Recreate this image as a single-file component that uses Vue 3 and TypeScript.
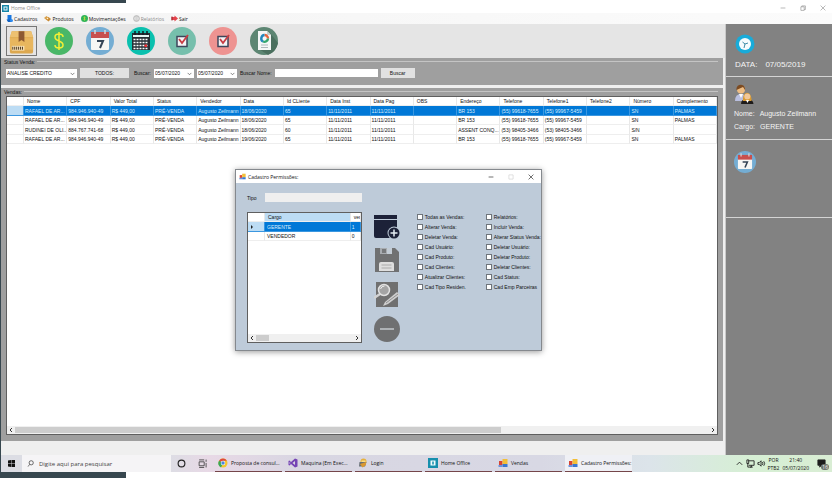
<script setup lang="ts">
import { ref } from 'vue'

interface Sale {
  selected?: boolean
  cells: string[]
}

interface TaskItem {
  icon: string
  label: string
  active?: boolean
}

const columns: string[] = [
  'Nome', 'CPF', 'Valor Total', 'Status', 'Vendedor', 'Data', 'Id CLiente', 'Data Inst',
  'Data Pag', 'OBS', 'Endereço', 'Telefone', 'Telefone1', 'Telefone2', 'Número', 'Complemento',
]

const sale = (name: string, cpf: string, date: string, id: string, address: string, phone: string, phone1: string, num: string, extra: string): string[] => [
  name, cpf, 'R$ 449,00', 'PRÉ-VENDA', 'Augusto Zeilmann', date, id, '11/11/2011', '11/11/2011', '', address, phone, phone1, '', num, extra,
]

const sales: Sale[] = [
  { selected: true, cells: sale('RAFAEL DE AR...', '984.946.940-49', '18/06/2020', '65', 'BR 153', '(55) 99618-7655', '(55) 99967-5459', 'SN', 'PALMAS') },
  { cells: sale('RAFAEL DE AR...', '984.946.940-49', '18/06/2020', '65', 'BR 153', '(55) 99618-7655', '(55) 99967-5459', 'SN', 'PALMAS') },
  { cells: sale('RUDINEI DE OLI...', '884.767.741-68', '18/06/2020', '60', 'ASSENT CONQ...', '(53) 98405-3466', '(53) 98405-3466', 'S/N', '') },
  { cells: sale('RAFAEL DE AR...', '984.946.940-49', '19/06/2020', '65', 'BR 153', '(55) 99618-7655', '(55) 99967-5459', 'SN', 'PALMAS') },
]

const permissionsLeft: string[] = ['Todas as Vendas:', 'Alterar Venda:', 'Deletar Venda:', 'Cad Usuário:', 'Cad Produto:', 'Cad Clientes:', 'Atualizar Clientes:', 'Cad Tipo Residen.']
const permissionsRight: string[] = ['Relatórios:', 'Incluir Venda:', 'Alterar Status Venda:', 'Deletar Usuário:', 'Deletar Produto:', 'Deletar Clientes:', 'Cad Status:', 'Cad Emp Parceiras']

const tasks: TaskItem[] = [
  { icon: 'chrome', label: 'Proposta de consul...' },
  { icon: 'vs', label: 'Maquina (Em Exec...' },
  { icon: 'login', label: 'Login' },
  { icon: 'home', label: 'Home Office' },
  { icon: 'form', label: 'Vendas' },
  { icon: 'form', label: 'Cadastro Permissões:', active: true },
]

const status = ref('ANALISE CREDITO')
const dateFrom = ref('05/07/2020')
const dateTo = ref('05/07/2020')
const customer = ref('')
const role = ref('')
const checked = ref<string[]>([])
</script>

<template>
  <div class="screen">
    <div class="strip strip-top"></div>

    <header class="titlebar">
      <svg class="app-icon" viewBox="0 0 14 14"><rect width="14" height="14" fill="#1686a8" /><rect x="3" y="3" width="8" height="8" fill="#e8f6fa" /><rect x="5" y="5" width="4" height="4" fill="#1686a8" /></svg>
      <span class="title">Home Office</span>
      <div class="win-buttons">
        <button aria-label="Minimizar"><svg viewBox="0 0 10 10"><path d="M1 5h8" /></svg></button>
        <button aria-label="Restaurar"><svg viewBox="0 0 10 10"><path d="M1.500 3h5.500v6h-5.500zM3 3v-1.500h6v6h-2" /></svg></button>
        <button aria-label="Fechar"><svg viewBox="0 0 10 10"><path d="M1 1l8 8M9 1l-8 8" /></svg></button>
      </div>
    </header>

    <nav class="menu">
      <a href="#"><svg viewBox="0 0 14 14"><path d="M3 0h8v11H3z" fill="#1877e0" /><path d="M1 9h8l3 5H4z" fill="#0f62c4" /><circle cx="11" cy="11" r="3" fill="#2f8cf0" /></svg>Cadastros</a>
      <a href="#"><svg viewBox="0 0 14 14"><path d="M0 6l5-4 5 4-5 4z" fill="#d9a04a" /><path d="M4 9l5-5 5 4-5 5z" fill="#c98a34" /><circle cx="7" cy="7" r="1.500" fill="#fff0cf" /></svg>Produtos</a>
      <a href="#"><svg viewBox="0 0 14 14"><circle cx="7" cy="7" r="7" fill="#2fb457" /><path d="M9 5c-3-2-5 1-2 2s1 4-2 2M7 3v8" fill="none" stroke="#e5ea38" /></svg>Movimentações</a>
      <a href="#" class="disabled"><svg viewBox="0 0 14 14"><circle cx="7" cy="7" r="6" fill="#e3e3e3" stroke="#999" /><path d="M4.500 3h5v8h-5zM6 5h2M6 7h2M6 9h2" fill="#fff" stroke="#aaa" /></svg>Relatórios</a>
      <a href="#"><svg viewBox="0 0 14 14"><path d="M1 4h6V1l7 6-7 6v-3H1z" fill="#e4434c" /><path d="M2 3v8" stroke="#8e252d" stroke-width="2" /></svg>Sair</a>
    </nav>

    <div class="body">
      <main class="workspace">
        <div class="toolbar">
          <button class="tool boxed" aria-label="Produtos">
            <svg viewBox="0 0 30 28"><path d="M5 4h20l2 6v15q0 2-2 2H5q-2 0-2-2V10z" fill="#dca84f" /><path d="M5 4h20l2 6H3z" fill="#edc171" /><path d="M3 11h24v12H3z" fill="#e8b65e" /><path d="M12 4h6v11l-3-2-3 2z" fill="#8d5932" /><path d="M5 19h13v5H5z" fill="#f5ddb1" /><path d="M6 20v3M8 20v3M10 20v3M12 20v3M14 20v3M16 20v3" stroke="#4c3822" /></svg>
          </button>
          <button class="tool" aria-label="Vendas">
            <svg viewBox="0 0 28 28"><circle cx="14" cy="14" r="14" fill="#49b768" /><path d="M18 10c0-2-2-3-4-3s-4 1-4 3c0 5 8 3 8 8 0 2-2 3-4 3s-4-1-4-3M14 5v18" fill="none" stroke="#f3ef35" stroke-width="1.500" /></svg>
          </button>
          <button class="tool" aria-label="Agenda">
            <svg viewBox="0 0 28 28"><circle cx="14" cy="14" r="14" fill="#74add3" /><path d="M5 10h18v12q0 1-1 1H6q-1 0-1-1z" fill="#f6f6f4" /><path d="M5 5h18v6H5z" fill="#c8504d" /><path d="M9 3v4M19 3v4" stroke="#d8d8d8" stroke-width="1.500" /><path d="M11 14h6l-3 7" fill="none" stroke="#344456" stroke-width="2" /></svg>
          </button>
          <button class="tool" aria-label="Calendário">
            <svg viewBox="0 0 28 28"><circle cx="14" cy="14" r="14" fill="#0ac0ae" /><path d="M5 6h18v17H5z" fill="#262f36" /><path d="M6 8h16v2H6z" fill="#e5f5f3" /><g stroke="#fff" stroke-width="1.600"><path d="M6.500 12.500h15M6.500 15.500h15M6.500 18.500h15M6.500 21.500h15" stroke-dasharray="2 1" /></g><path d="M8 4v4M12 4v4M16 4v4M20 4v4" stroke="#111b22" stroke-width="1.500" /><path d="M17.500 17.500h2.500v2.500h-2.500z" fill="#f02e35" /></svg>
          </button>
          <button class="tool" aria-label="Confirmar">
            <svg viewBox="0 0 28 28"><circle cx="14" cy="14" r="14" fill="#76bfac" /><path d="M9 9.500h10v10H9z" fill="#f4f4f6" stroke="#3d465b" stroke-width="1.500" /><path d="M11 12l3 4 6-8" fill="none" stroke="#c83c43" stroke-width="1.800" /></svg>
          </button>
          <button class="tool" aria-label="Cancelar">
            <svg viewBox="0 0 28 28"><circle cx="14" cy="14" r="14" fill="#ee9391" /><path d="M9 9.500h10v10H9z" fill="#f4f4f6" stroke="#3d465b" stroke-width="1.500" /><path d="M11 12l3 4 6-8" fill="none" stroke="#c83c43" stroke-width="1.800" /></svg>
          </button>
          <button class="tool" aria-label="Relatórios">
            <svg viewBox="0 0 28 28"><circle cx="14" cy="14" r="14" fill="#5d8673" /><path d="M20 6l8 10q-2 9-10 12l-9-6z" fill="#4b705f" /><path d="M8 4h9l4 4v15H8z" fill="#f5f7f7" /><path d="M17 4l4 4h-4z" fill="#c6d0cd" /><g fill="none" stroke-width="2.400"><path d="M14.500 8a3.500 3.500 0 0 1 3.500 3.500" stroke="#e8643c" /><path d="M18 11.500a3.500 3.500 0 0 1-5 3" stroke="#35a66d" /><path d="M13 14.500a3.500 3.500 0 0 1 1.500-6.500" stroke="#2387bd" /></g><path d="M11 18h7M11 20.500h7" stroke="#aeb7bb" /></svg>
          </button>
        </div>

        <section class="group filters">
          <div class="caption"><span>Status Venda:</span></div>
          <form class="filter-row" @submit.prevent>
            <div class="combo status-combo">
              <select v-model="status" aria-label="Status Venda"><option>ANALISE CREDITO</option></select>
              <svg viewBox="0 0 8 8"><path d="M1 3l3 3 3-3" /></svg>
            </div>
            <button class="btn wide">TODOS:</button>
            <label for="from">Buscar:</label>
            <div class="combo date">
              <input id="from" v-model="dateFrom" type="text">
              <svg viewBox="0 0 8 8"><path d="M1 3l3 3 3-3" /></svg>
            </div>
            <div class="combo date">
              <input v-model="dateTo" type="text" aria-label="Data final">
              <svg viewBox="0 0 8 8"><path d="M1 3l3 3 3-3" /></svg>
            </div>
            <label for="customer">Buscar Nome:</label>
            <input id="customer" v-model="customer" class="name-input" type="text">
            <button class="btn">Buscar</button>
          </form>
        </section>

        <section class="group sales">
          <div class="caption"><span>Vendas:</span></div>
          <div class="grid-box">
            <table class="grid">
              <thead>
                <tr><th class="marker"></th><th v-for="c in columns" :key="c">{{ c }}</th></tr>
              </thead>
              <tbody>
                <tr v-for="(s, i) in sales" :key="i" :class="{ selected: s.selected }">
                  <td class="marker"></td>
                  <td v-for="(cell, j) in s.cells" :key="j">{{ cell }}</td>
                </tr>
              </tbody>
            </table>
            <div class="scrollbar">
              <svg viewBox="0 0 8 8"><path d="M5 2l-2 2 2 2" /></svg>
              <div class="track"><div class="thumb main-thumb"></div></div>
              <svg viewBox="0 0 8 8"><path d="M3 2l2 2-2 2" /></svg>
            </div>
          </div>
        </section>
        <div class="status-footer"></div>
      </main>

      <aside class="sidebar">
        <section class="card date-card">
          <svg viewBox="0 0 20 20"><circle cx="10" cy="10" r="9.500" fill="#19abd9" /><circle cx="10" cy="10" r="6" fill="#f5fbfd" /><path d="M7.500 8l2.500 2 3-1M10 10l-1 4" fill="none" stroke="#3e8ca7" /></svg>
          <p class="today"><span>DATA:</span><span>07/05/2019</span></p>
        </section>
        <section class="card user-card">
          <svg viewBox="0 0 20 20"><path d="M1 17q0-7 6-7t6 7z" fill="#b9bfdf" /><path d="M5 10l2 4 2-4z" fill="#fff" /><circle cx="7" cy="5.500" r="4" fill="#eebd83" /><path d="M2.500 6C1.500-1 12-1 11 6L9 3z" fill="#7c4b22" /><path d="M7 20q0-5 6-5t6.500 5z" fill="#1e1b1a" /><path d="M9 17C8 6 18 6 17.500 17z" fill="#d89a32" /><circle cx="13.300" cy="12.500" r="3" fill="#f2c899" /><path d="M12 16h3l-1.500 3z" fill="#fff" /></svg>
          <p><span>Nome:</span><span>Augusto Zeilmann</span></p>
          <p><span>Cargo:</span><span>GERENTE</span></p>
        </section>
        <section class="card agenda-card">
          <svg viewBox="0 0 28 28"><circle cx="14" cy="14" r="14" fill="#74add3" /><path d="M5 10h18v12q0 1-1 1H6q-1 0-1-1z" fill="#f6f6f4" /><path d="M5 5h18v6H5z" fill="#c8504d" /><path d="M9 3v4M19 3v4" stroke="#d8d8d8" stroke-width="1.500" /><path d="M11 14h6l-3 7" fill="none" stroke="#344456" stroke-width="2" /></svg>
        </section>
      </aside>
    </div>

    <footer class="taskbar">
      <button class="start" aria-label="Iniciar"><svg viewBox="0 0 8 8"><path d="M0 .6L3.500 0v3.700H0zM4 0h4v3.700H4zM0 4.200h3.500V8L0 7.400zM4 4.200h4V8H4z" fill="#111" /></svg></button>
      <label class="search">
        <svg viewBox="0 0 10 10"><circle cx="6" cy="4" r="3" /><path d="M4 6.500L1 9.500" /></svg>
        <input type="text" placeholder="Digite aqui para pesquisar" aria-label="Pesquisar">
      </label>
      <button class="sys" aria-label="Cortana"><svg viewBox="0 0 8 8"><circle cx="4" cy="4" r="3" fill="none" stroke="#222" stroke-width="1" /></svg></button>
      <button class="sys" aria-label="Visão de tarefas"><svg viewBox="0 0 8 8"><path d="M1 2.500h4.500v3.500H1zM1 .8h4.500M1 7.500h4.500M7.200 .5v2M7.200 3.500v4" fill="none" stroke="#333" stroke-width=".7" /></svg></button>
      <div class="tasks">
        <button v-for="t in tasks" :key="t.label" class="task" :class="{ active: t.active }">
          <svg v-if="t.icon === 'chrome'" viewBox="0 0 20 20"><circle cx="10" cy="10" r="9" fill="#f3c530" /><path d="M10 10L2.200 5.500A9 9 0 0 1 17.800 5.500H10z" fill="#df493d" /><path d="M10 10L6 19A9 9 0 0 1 2.200 5.500z" fill="#3ba757" /><circle cx="10" cy="10" r="4.500" fill="#fff" /><circle cx="10" cy="10" r="3.500" fill="#4c85dc" /></svg>
          <svg v-else-if="t.icon === 'vs'" viewBox="0 0 20 20"><path d="M14 1l5 2v14l-5 2-8-7-3 3-2-1V6l2-1 3 3zM14 6l-5 4 5 4zM3 8v4l2-2z" fill="#7544b4" fill-rule="evenodd" /></svg>
          <svg v-else-if="t.icon === 'login'" viewBox="0 0 20 20"><circle cx="11" cy="7" r="6" fill="#e6b13d" /><path d="M3 8h14l-3 9H2z" fill="#666f76" /><path d="M4 12l12-4v6l-7 5z" fill="#d99831" /><path d="M7 5h8v3H7z" fill="#f7dc8b" /></svg>
          <svg v-else-if="t.icon === 'home'" viewBox="0 0 20 20"><path d="M0 0h20v20H0z" fill="#168fad" /><path d="M5 5h10v10H5z" fill="#f3fcfd" /><path d="M8 7h4v6H8z" fill="#48a9bf" /></svg>
          <svg v-else viewBox="0 0 20 20"><path d="M2 6h7v8H2z" fill="#d84432" /><path d="M9 2h10v10H9z" fill="#f2bf38" /><path d="M9 12h10v6H9z" fill="#3b77d0" /><path d="M1 14h8v4H1z" fill="#6e91d8" /></svg>
          <span>{{ t.label }}</span>
        </button>
      </div>
      <div class="tray">
        <svg viewBox="0 0 10 10"><path d="M2 6.500l3-3 3 3" /></svg>
        <svg viewBox="0 0 10 10"><path d="M3 2h6v5H3M1 1v4h2V1zM2 5v4h4M6 7v2M4.500 9h3" /></svg>
        <svg viewBox="0 0 10 10"><path d="M1 4h1.500l2-2v6l-2-2H1zM6 3.500q1 1.500 0 3M7.500 2.500q2 2.500 0 5" /></svg>
        <div class="lang"><span>POR</span><span>PTB2</span></div>
        <div class="clock"><span>21:40</span><span>05/07/2020</span></div>
        <div class="notice"><svg viewBox="0 0 10 10"><path d="M1 1h8v6H5L3 9V7H1z" fill="#1c1c1c" /></svg><span>16</span></div>
      </div>
    </footer>
    <div class="strip strip-bottom"></div>

    <div class="dialog" role="dialog" aria-labelledby="dialog-title">
      <div class="dialog-bar">
        <svg class="form-icon" viewBox="0 0 20 20"><path d="M2 6h7v8H2z" fill="#d84432" /><path d="M9 2h10v10H9z" fill="#f2bf38" /><path d="M9 12h10v6H9z" fill="#3b77d0" /><path d="M1 14h8v4H1z" fill="#6e91d8" /></svg>
        <span id="dialog-title">Cadastro Permissões:</span>
        <div class="win-buttons">
          <button aria-label="Minimizar"><svg viewBox="0 0 10 10"><path d="M1 5h8" /></svg></button>
          <button aria-label="Maximizar" disabled><svg viewBox="0 0 10 10"><path d="M1.500 1.500h7v7h-7z" /></svg></button>
          <button aria-label="Fechar"><svg viewBox="0 0 10 10"><path d="M1 1l8 8M9 1l-8 8" /></svg></button>
        </div>
      </div>
      <div class="dialog-body">
        <div class="form-side">
          <div class="field"><label for="role">Tipo</label><input id="role" v-model="role" type="text"></div>
          <div class="grid-box role-box">
            <table class="grid roles">
              <thead><tr><th class="marker"></th><th class="on">Cargo</th><th class="ven">ven</th></tr></thead>
              <tbody>
                <tr class="selected"><td class="marker"><svg viewBox="0 0 4 6"><path d="M1 1l2 2-2 2z" fill="#222" /></svg></td><td>GERENTE</td><td>1</td></tr>
                <tr><td class="marker"></td><td>VENDEDOR</td><td>0</td></tr>
              </tbody>
            </table>
            <div class="scrollbar">
              <svg viewBox="0 0 8 8"><path d="M5 2l-2 2 2 2" /></svg>
              <div class="track"><div class="thumb role-thumb"></div></div>
              <svg viewBox="0 0 8 8"><path d="M3 2l2 2-2 2" /></svg>
            </div>
          </div>
        </div>
        <div class="actions">
          <button aria-label="Novo"><svg viewBox="0 0 26 26"><path d="M0 1h23v4H0zM0 6h23v18H2q-2 0-2-2z" fill="#1c2138" /><circle cx="20" cy="19" r="6.500" fill="#becbd9" /><circle cx="20" cy="19" r="5.500" fill="#1c2138" /><path d="M20 15.500v7M16.500 19h7" stroke="#e5edf3" stroke-width="1.500" /></svg></button>
          <button aria-label="Salvar"><svg viewBox="0 0 26 26"><path d="M1 0h5v6h12V0h3l4 4v20H1z" fill="#707172" /><path d="M6 0h12v6H6z" fill="#a8acb0" /><path d="M8 1h4v4H8z" fill="#77797b" /><path d="M13 0h5v6h-5z" fill="#c3ccd5" /><path d="M5 23v-7q0-2 2-2h11q2 0 2 2v7z" fill="#dedede" /><path d="M7.500 17h10M7.500 20h10" stroke="#aaa" /></svg></button>
          <button aria-label="Pesquisar e editar"><svg viewBox="0 0 26 26"><path d="M2 0h22v25H2z" fill="#707070" /><path d="M6 12l-6 4" stroke="#d2d2d2" stroke-width="2.500" /><circle cx="10" cy="8" r="5.500" fill="#a4a4a4" stroke="#e1e1e1" stroke-width="1.500" /><path d="M6.500 7q1-3 4-3" fill="none" stroke="#eee" /><path d="M9 24l2-4L23 10l3 3-12 9z" fill="#cfcfcf" /><path d="M12 21L24 12" stroke="#909090" /></svg></button>
          <button aria-label="Remover"><svg viewBox="0 0 26 26"><circle cx="13" cy="13" r="13" fill="#6f7071" /><path d="M6 13h14" stroke="#c3c8cc" stroke-width="1.500" /></svg></button>
        </div>
        <div class="checks">
          <label v-for="p in permissionsLeft" :key="p"><input v-model="checked" type="checkbox" :value="p">{{ p }}</label>
        </div>
        <div class="checks">
          <label v-for="p in permissionsRight" :key="p"><input v-model="checked" type="checkbox" :value="p">{{ p }}</label>
        </div>
      </div>
    </div>
  </div>
</template>

<style>
body {
  margin: 0;
  background: #fff;
}
</style>

<style scoped>
.screen {
  position: relative;
  display: flex;
  flex-direction: column;
  min-height: 100vh;
  box-sizing: border-box;
  border-left: 1px solid #37474f;
  font: 5px/6px "Liberation Sans", sans-serif;
  color: #111;
}
.screen * { box-sizing: border-box; }
svg { display: block; flex: none; }
button, input, select {
  margin: 0;
  padding: 0;
  border: 0;
  border-radius: 0;
  background: none;
  font: inherit;
  color: inherit;
  min-width: 0;
  outline: none;
}
p { margin: 0; }
.strip { width: 125px; background: #37474f; }
.strip-top { height: 3px; }
.strip-bottom { height: 6px; }

.titlebar {
  display: flex;
  align-items: center;
  gap: 2px;
  height: 10px;
  padding-left: 1px;
  font-family: "Open Sans", sans-serif;
  color: #8a8a8a;
}
.app-icon { width: 7px; height: 7px; }
.title { flex: 1; }
.win-buttons { display: flex; gap: 14px; margin-left: auto; }
.win-buttons svg {
  width: 6px;
  height: 6px;
  fill: none;
  stroke: currentColor;
  stroke-width: 1;
}
.titlebar .win-buttons { padding-right: 6px; }

.menu {
  display: flex;
  align-items: center;
  gap: 7px;
  height: 11px;
  padding-left: 5px;
  background: linear-gradient(90deg, #f4f4f4, #fbfbfb);
  font-family: "Open Sans", sans-serif;
}
.menu a {
  display: flex;
  align-items: center;
  gap: 1px;
  color: #111;
  text-decoration: none;
}
.menu a.disabled { color: #8c8c8c; }
.menu svg { width: 7px; height: 7px; }

.body { display: flex; flex: 1; }
.workspace {
  display: flex;
  flex-direction: column;
  flex: 1;
  min-width: 0;
  background: #efefef;
}
.toolbar {
  display: flex;
  align-items: center;
  gap: 13px;
  height: 34px;
  padding-left: 5px;
  background: #e5e5e5;
}
.tool svg { width: 28px; height: 28px; }
.tool.boxed { border: 1px solid #777; margin-right: -5px; }
.tool.boxed svg { width: 29px; }

.group {
  display: flex;
  flex-direction: column;
  margin-right: 2px;
  padding: 0 5px 0 3px;
  background: #9f9f9f;
}
.caption {
  display: flex;
  align-items: center;
  gap: 2px;
  height: 7px;
}
.caption::after {
  content: "";
  flex: 1;
  height: 1px;
  background: #c4c4c4;
}
.filters { height: 27px; margin-bottom: 3px; }
.filter-row {
  display: flex;
  align-items: center;
  gap: 3px;
  padding: 3px 0 0 2px;
}
.combo {
  position: relative;
  display: flex;
  align-items: center;
  height: 9px;
  padding-right: 2px;
  background: #fff;
}
.combo select, .combo input {
  appearance: none;
  flex: 1;
  height: 9px;
  padding-left: 1px;
}
.combo svg {
  width: 5px;
  height: 5px;
  fill: none;
  stroke: #444;
}
.status-combo { width: 71px; }
.date { width: 40px; }
.btn {
  width: 34px;
  height: 10px;
  background: #e1e1e1;
  text-align: center;
}
.btn.wide { width: 49px; margin-right: 2px; }
.name-input {
  width: 103px;
  height: 8px;
  background: #fff;
}

.sales { flex: 1; padding-bottom: 6px; }
.sales .grid-box { flex: 1; margin: 1px 0 0 2px; }
.grid-box {
  display: flex;
  flex-direction: column;
  border: 1px solid #5f5f5f;
  background: #fff;
  overflow: hidden;
}
.grid {
  width: 100%;
  table-layout: fixed;
  border-collapse: separate;
  border-spacing: 0;
}
.grid th, .grid td {
  height: 10px;
  padding: 0 0 0 1px;
  border-right: 1px solid #e8e8e8;
  border-bottom: 1px solid #eee;
  line-height: 6px;
  font-weight: 400;
  text-align: left;
  white-space: nowrap;
  overflow: hidden;
}
.grid th { padding-left: 3px; height: 9px; }
.grid tr:nth-child(even) td { height: 9px; }
.grid .marker { width: 17px; }
.grid .selected td {
  background: #0078d7;
  border-color: #3b97e0;
  color: #d9ecfb;
}
.grid .selected td.marker { background: #bcdcf4; }
.scrollbar {
  display: flex;
  align-items: center;
  margin-top: auto;
  height: 8px;
  background: #f0f0f0;
}
.scrollbar svg {
  width: 8px;
  height: 8px;
  fill: none;
  stroke: #333;
}
.track { flex: 1; height: 6px; }
.thumb { height: 6px; background: #cdcdcd; }
.main-thumb { width: 70%; }
.role-thumb { width: 13%; }
.status-footer { height: 14px; }

.sidebar {
  width: 107px;
  background: #828282;
  border-left: 1px solid #c9c9c9;
  color: #f4f4f4;
}
.card {
  border-bottom: 1px solid #d4d4d4;
  font-size: 7px;
  line-height: 13px;
}
.card svg { width: 20px; height: 20px; }
.card p { display: flex; gap: 5px; }
.date-card { height: 53px; padding: 10px 0 0 9px; }
.date-card .today {
  padding-top: 4px;
  gap: 8px;
  font-size: 8px;
}
.user-card { height: 63px; padding: 7px 0 0 8px; }
.user-card p { margin: 3px 0 -3px; }
.agenda-card { height: 78px; padding: 11px 0 0 8px; }
.agenda-card svg { width: 22px; height: 22px; }

.taskbar {
  display: flex;
  height: 17px;
  background: linear-gradient(90deg, #dcdde4 20%, #e8d9e6 25%, #d8d6e2 36%, #d8d8e4 65%, #dce4ea 78%, #d6efd4 90%, #d9edd4);
  font-family: "Open Sans", sans-serif;
}
.start {
  display: grid;
  place-items: center;
  width: 21px;
}
.start svg { width: 7px; height: 7px; }
.search {
  display: flex;
  align-items: center;
  gap: 5px;
  width: 149px;
  padding-left: 5px;
  background: #f5f4f6;
}
.search svg {
  width: 7px;
  height: 7px;
  fill: none;
  stroke: #333;
}
.search input { flex: 1; font-size: 6px; height: 10px; }
.search input::placeholder { color: #444; opacity: 1; }
.sys {
  display: grid;
  place-items: center;
  width: 21px;
}
.sys svg { width: 9px; height: 9px; }
.tasks { display: flex; gap: 3px; padding-left: 2px; }
.task {
  display: flex;
  align-items: center;
  gap: 3px;
  width: 67px;
  padding-left: 3px;
  border-bottom: 1px solid #75464a;
  white-space: nowrap;
}
.task.active { background: #eff0f5; }
.task svg { width: 10px; height: 10px; }
.tray {
  display: flex;
  align-items: center;
  gap: 2px;
  margin-left: auto;
  padding-right: 6px;
}
.tray svg {
  width: 9px;
  height: 9px;
  fill: none;
  stroke: #222;
}
.lang, .clock {
  display: flex;
  flex-direction: column;
  align-items: center;
  line-height: 8px;
}
.clock { padding-left: 1px; }
.notice { position: relative; padding-left: 6px; }
.notice span {
  position: absolute;
  right: -3px;
  bottom: -2px;
  padding: 0 1px;
  border-radius: 3px;
  background: #6d736d;
  color: #fff;
}

.dialog {
  position: absolute;
  left: 234px;
  top: 169px;
  width: 307px;
  border: 1px solid #85898e;
  background: #becbd9;
  box-shadow: 0 1px 6px rgba(0, 0, 0, 0.4);
}
.dialog-bar {
  display: flex;
  align-items: center;
  gap: 2px;
  height: 13px;
  padding: 0 7px 0 3px;
  background: #fff;
  font-family: "Open Sans", sans-serif;
}
.form-icon { width: 7px; height: 7px; }
.dialog-bar button:disabled { color: #ccc; }
.dialog-body {
  display: flex;
  padding: 10px 0 7px 11px;
}
.form-side { width: 115px; }
.field {
  display: flex;
  align-items: center;
  justify-content: space-between;
  margin-bottom: 10px;
}
.field input {
  width: 97px;
  height: 9px;
  background: #efefef;
}
.role-box { height: 131px; }
.roles .on { background: #bcdcf4; }
.roles .ven { width: 10px; }
.roles td:nth-child(2) { padding-left: 2px; }
.grid.roles .marker { padding-left: 2px; }
.marker svg { width: 4px; height: 6px; }
.actions {
  display: flex;
  flex-direction: column;
  gap: 8px;
  padding: 21px 0 0 12px;
}
.actions svg { width: 26px; height: 26px; }
.checks {
  display: flex;
  flex-direction: column;
  width: 69px;
  padding-top: 19px;
  margin-left: 17px;
}
.checks + .checks { margin-left: 0; width: auto; }
.checks label {
  display: flex;
  align-items: center;
  gap: 2px;
  height: 10px;
  white-space: nowrap;
}
.checks input {
  appearance: none;
  width: 6px;
  height: 6px;
  border: 1px solid #6f757b;
  background: #fff;
}
.checks input:checked { background: #0078d7; }
</style>
